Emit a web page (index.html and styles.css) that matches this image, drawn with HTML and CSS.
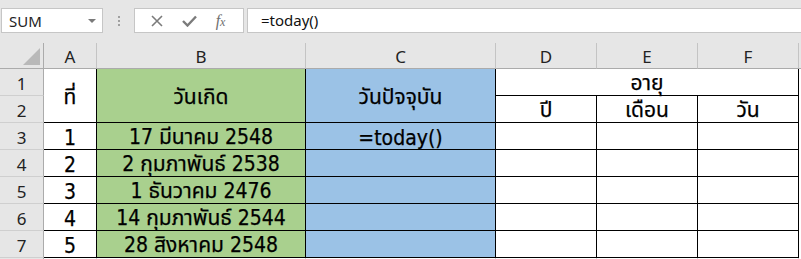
FILE: index.html
```html
<!DOCTYPE html>
<html lang="th">
<head>
    <meta charset="UTF-8">
    <title>today</title>
    <link rel="stylesheet" href="styles.css">
</head>
<body>
    <div class="formula-bar">
        <div class="name-box">
            <span>SUM</span>
            <span class="arrow"></span>
        </div>
        <div class="grip"><i></i><i></i><i></i></div>
        <div class="buttons">
            <svg width="12" height="12" viewBox="0 0 12 12"><path d="M1 1 L11 11 M11 1 L1 11" stroke="#7b7b7b" stroke-width="1.6" fill="none"/></svg>
            <svg width="15" height="12" viewBox="0 0 15 12"><path d="M1 6 L5.5 10.5 L14 1.5" stroke="#7b7b7b" stroke-width="2.4" fill="none"/></svg>
            <span class="fx">f<small>x</small></span>
        </div>
        <div class="formula-input">=today()</div>
    </div>

    <div class="sheet">
        <div class="corner"><span class="tri"></span></div>
        <div class="col-head">A</div>
        <div class="col-head">B</div>
        <div class="col-head">C</div>
        <div class="col-head">D</div>
        <div class="col-head">E</div>
        <div class="col-head">F</div>
        <div class="col-head end"></div>

        <!-- rows 1-2 -->
        <div class="row-head">1</div>
        <div class="cell span-rows">ที่</div>
        <div class="cell green span-rows">วันเกิด</div>
        <div class="cell blue span-rows">วันปัจจุบัน</div>
        <div class="cell span-cols">อายุ</div>
        <div class="tail"></div>
        <div class="row-head">2</div>
        <div class="cell">ปี</div>
        <div class="cell">เดือน</div>
        <div class="cell">วัน</div>
        <div class="tail"></div>

        <div class="row-head">3</div>
        <div class="cell">1</div>
        <div class="cell green">17 มีนาคม 2548</div>
        <div class="cell blue">=today()</div>
        <div class="cell"></div><div class="cell"></div><div class="cell"></div>
        <div class="tail"></div>

        <div class="row-head">4</div>
        <div class="cell">2</div>
        <div class="cell green">2 กุมภาพันธ์ 2538</div>
        <div class="cell blue"></div>
        <div class="cell"></div><div class="cell"></div><div class="cell"></div>
        <div class="tail"></div>

        <div class="row-head">5</div>
        <div class="cell">3</div>
        <div class="cell green">1 ธันวาคม 2476</div>
        <div class="cell blue"></div>
        <div class="cell"></div><div class="cell"></div><div class="cell"></div>
        <div class="tail"></div>

        <div class="row-head">6</div>
        <div class="cell">4</div>
        <div class="cell green">14 กุมภาพันธ์ 2544</div>
        <div class="cell blue"></div>
        <div class="cell"></div><div class="cell"></div><div class="cell"></div>
        <div class="tail"></div>

        <div class="row-head">7</div>
        <div class="cell">5</div>
        <div class="cell green">28 สิงหาคม 2548</div>
        <div class="cell blue"></div>
        <div class="cell"></div><div class="cell"></div><div class="cell"></div>
        <div class="tail"></div>

        <!-- top sliver of row 8 -->
        <div class="row-head"></div>
        <div class="grid-cell"></div><div class="grid-cell"></div><div class="grid-cell"></div>
        <div class="grid-cell"></div><div class="grid-cell"></div><div class="grid-cell"></div>
        <div class="tail"></div>
    </div>
</body>
</html>
```

FILE: styles.css
```css
* {
    box-sizing: border-box;
}

body {
    margin: 0;
    background: #ffffff;
    font-family: "Noto Sans", "DejaVu Sans", sans-serif;
    overflow: hidden;
}

/* formula bar */
.formula-bar {
    height: 43px;
    background: #e6e6e6;
    display: flex;
    align-items: flex-start;
    padding-top: 8px;
    padding-left: 1px;
}

.name-box {
    width: 102px;
    height: 25px;
    background: #ffffff;
    border: 1px solid #c6c6c6;
    display: flex;
    align-items: center;
    justify-content: space-between;
    padding: 0 6px 0 7px;
    font-size: 15px;
    color: #222;
}

.name-box .arrow {
    width: 0;
    height: 0;
    border-left: 4px solid transparent;
    border-right: 4px solid transparent;
    border-top: 4px solid #7a7a7a;
}

.grip {
    width: 31px;
    height: 25px;
    display: flex;
    flex-direction: column;
    align-items: center;
    justify-content: center;
    gap: 2px;
}

.grip i {
    width: 2px;
    height: 2px;
    background: #a0a0a0;
}

.buttons {
    width: 110px;
    height: 25px;
    background: #ffffff;
    border: 1px solid #c6c6c6;
    display: flex;
    align-items: center;
    justify-content: space-around;
    padding: 0 8px 0 6px;
}

.fx {
    font-family: "Liberation Serif", serif;
    font-style: italic;
    font-size: 16px;
    color: #6f6f6f;
    line-height: 1;
}

.fx small {
    font-size: 12px;
}

.formula-input {
    flex: 1;
    height: 25px;
    margin-left: 3px;
    background: #ffffff;
    border: 1px solid #c6c6c6;
    border-right: none;
    padding-left: 13px;
    font-size: 15px;
    line-height: 22px;
    color: #111;
}

/* sheet */
.sheet {
    display: grid;
    grid-template-columns: 44px 53px 209px 190px 101px 101px 101px 1fr;
    grid-template-rows: 26px repeat(7, 27px) 2px;
}

.corner,
.col-head {
    background: #e6e6e6;
    border-bottom: 1px solid #ababab;
    border-right: 1px solid #c4c4c4;
}

.corner {
    position: relative;
    border-right-color: #ababab;
}

.corner .tri {
    position: absolute;
    right: 3px;
    bottom: 3px;
    width: 0;
    height: 0;
    border-left: 17px solid transparent;
    border-bottom: 17px solid #b9b9b9;
}

.col-head {
    display: flex;
    align-items: center;
    justify-content: center;
    font-size: 17px;
    color: #222;
    padding-top: 2px;
}

.col-head.end {
    border-right: none;
}

.row-head {
    background: #e6e6e6;
    border-right: 1px solid #ababab;
    border-bottom: 1px solid #cfcfcf;
    display: flex;
    align-items: center;
    justify-content: center;
    font-size: 17px;
    color: #222;
    padding-top: 2px;
}

.cell {
    border-right: 1px solid #000000;
    border-bottom: 1px solid #000000;
    display: flex;
    align-items: center;
    justify-content: center;
    font-family: "DejaVu Sans Condensed", "DejaVu Sans", "Noto Sans Thai", sans-serif;
    font-size: 21px;
    color: #000000;
    white-space: nowrap;
    padding-top: 3px;
    -webkit-text-stroke: 0.25px #000000;
}

.span-rows {
    grid-row: span 2;
}

.span-cols {
    grid-column: span 3;
}

.green {
    background: #a9d08e;
}

.blue {
    background: #9bc2e6;
}

.grid-cell {
    border-right: 1px solid #d4d4d4;
}

.tail {
    background: #ffffff;
}
```
